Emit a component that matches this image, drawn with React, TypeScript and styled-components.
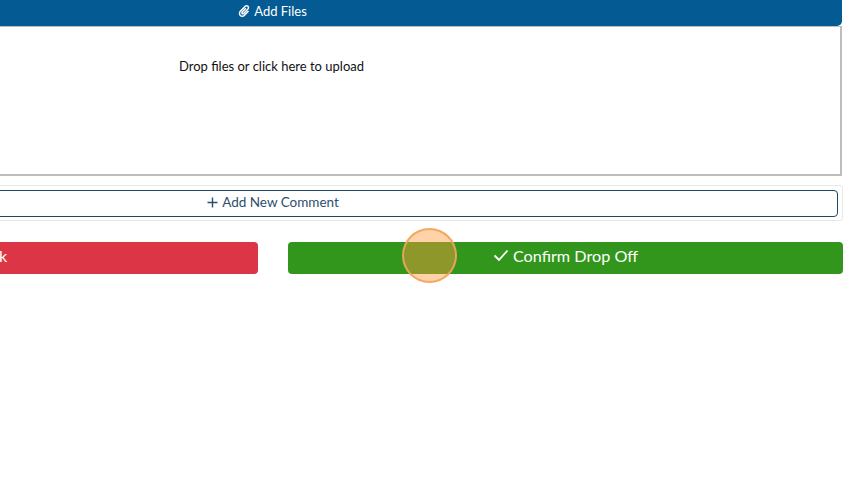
import React from 'react'
import styled, { createGlobalStyle } from 'styled-components'
import { FaPaperclip } from 'react-icons/fa'

const GlobalStyle = createGlobalStyle`
  html, body {
    margin: 0;
    padding: 0;
    height: 100%;
    overflow: hidden;
    background: #ffffff;
  }
  body {
    font-family: Lato, 'Open Sans', sans-serif;
  }
`

const Page = styled.div`
  width: 1140px;
  margin-left: -297px;
  display: flex;
  flex-direction: column;
`

const AddFilesBar = styled.div`
  height: 26px;
  width: 1139px;
  box-sizing: border-box;
  padding-bottom: 4px;
  background: #045a92;
  border-radius: 0 0 5px 5px;
  color: #ffffff;
  font-size: 13px;
  display: flex;
  align-items: center;
  justify-content: center;
  gap: 4px;
`

const DropZone = styled.div`
  height: 150px;
  width: 1139px;
  box-sizing: border-box;
  background: #ffffff;
  border: 2px solid #bdbdbd;
  border-top-width: 1px;
  border-left: 0;
  padding-top: 30px;
  text-align: center;
  color: #111111;
  font-size: 13px;
  line-height: 18px;
`

const CommentWrap = styled.div`
  margin-top: 9px;
  height: 36px;
  box-sizing: border-box;
  border: 1px solid #e8e8e8;
  border-radius: 3px;
  padding: 4px;
`

const CommentButton = styled.div`
  height: 27px;
  box-sizing: border-box;
  padding-bottom: 3px;
  border: 1px solid #1d4a63;
  border-radius: 4px;
  background: #ffffff;
  color: #2c4f6e;
  font-size: 13.5px;
  display: flex;
  align-items: center;
  justify-content: center;
  gap: 4px;
`

const ActionRow = styled.div`
  margin-top: 21px;
  display: grid;
  grid-template-columns: 555px 555px;
  column-gap: 30px;
`

const ActionButton = styled.div<{ $bg: string }>`
  height: 32px;
  box-sizing: border-box;
  padding-bottom: 5px;
  border-radius: 4px;
  background: ${(p) => p.$bg};
  color: #ffffff;
  font-size: 16.2px;
  display: flex;
  align-items: center;
  justify-content: center;
  gap: 4px;
`

const BackButton = styled(ActionButton)`
  padding-right: 6px;
`

const ClickMarker = styled.div`
  position: absolute;
  left: 402px;
  top: 228px;
  width: 55px;
  height: 55px;
  box-sizing: border-box;
  border-radius: 50%;
  background: rgba(255, 155, 60, 0.45);
  border: 2px solid rgba(240, 165, 95, 0.9);
`

export default function App() {
  return (
    <>
      <GlobalStyle />
      <Page>
        <AddFilesBar>
          <FaPaperclip size={12} />
          Add Files
        </AddFilesBar>
        <DropZone>Drop files or click here to upload</DropZone>
        <CommentWrap>
          <CommentButton>
            <svg width="11" height="11" viewBox="0 0 11 11" fill="none" stroke="#2c4f6e" strokeWidth="1.4">
              <path d="M5.5 0.5v10M0.5 5.5h10" />
            </svg>
            Add New Comment
          </CommentButton>
        </CommentWrap>
        <ActionRow>
          <BackButton $bg="#dc3545">Go Back</BackButton>
          <ActionButton $bg="#32961c">
            <svg width="16" height="13" viewBox="0 0 16 13" fill="none" stroke="#ffffff" strokeWidth="1.8">
              <path d="M1.5 6.5l4.5 4.5L14.5 1.5" />
            </svg>
            Confirm Drop Off
          </ActionButton>
        </ActionRow>
      </Page>
      <ClickMarker />
    </>
  )
}
